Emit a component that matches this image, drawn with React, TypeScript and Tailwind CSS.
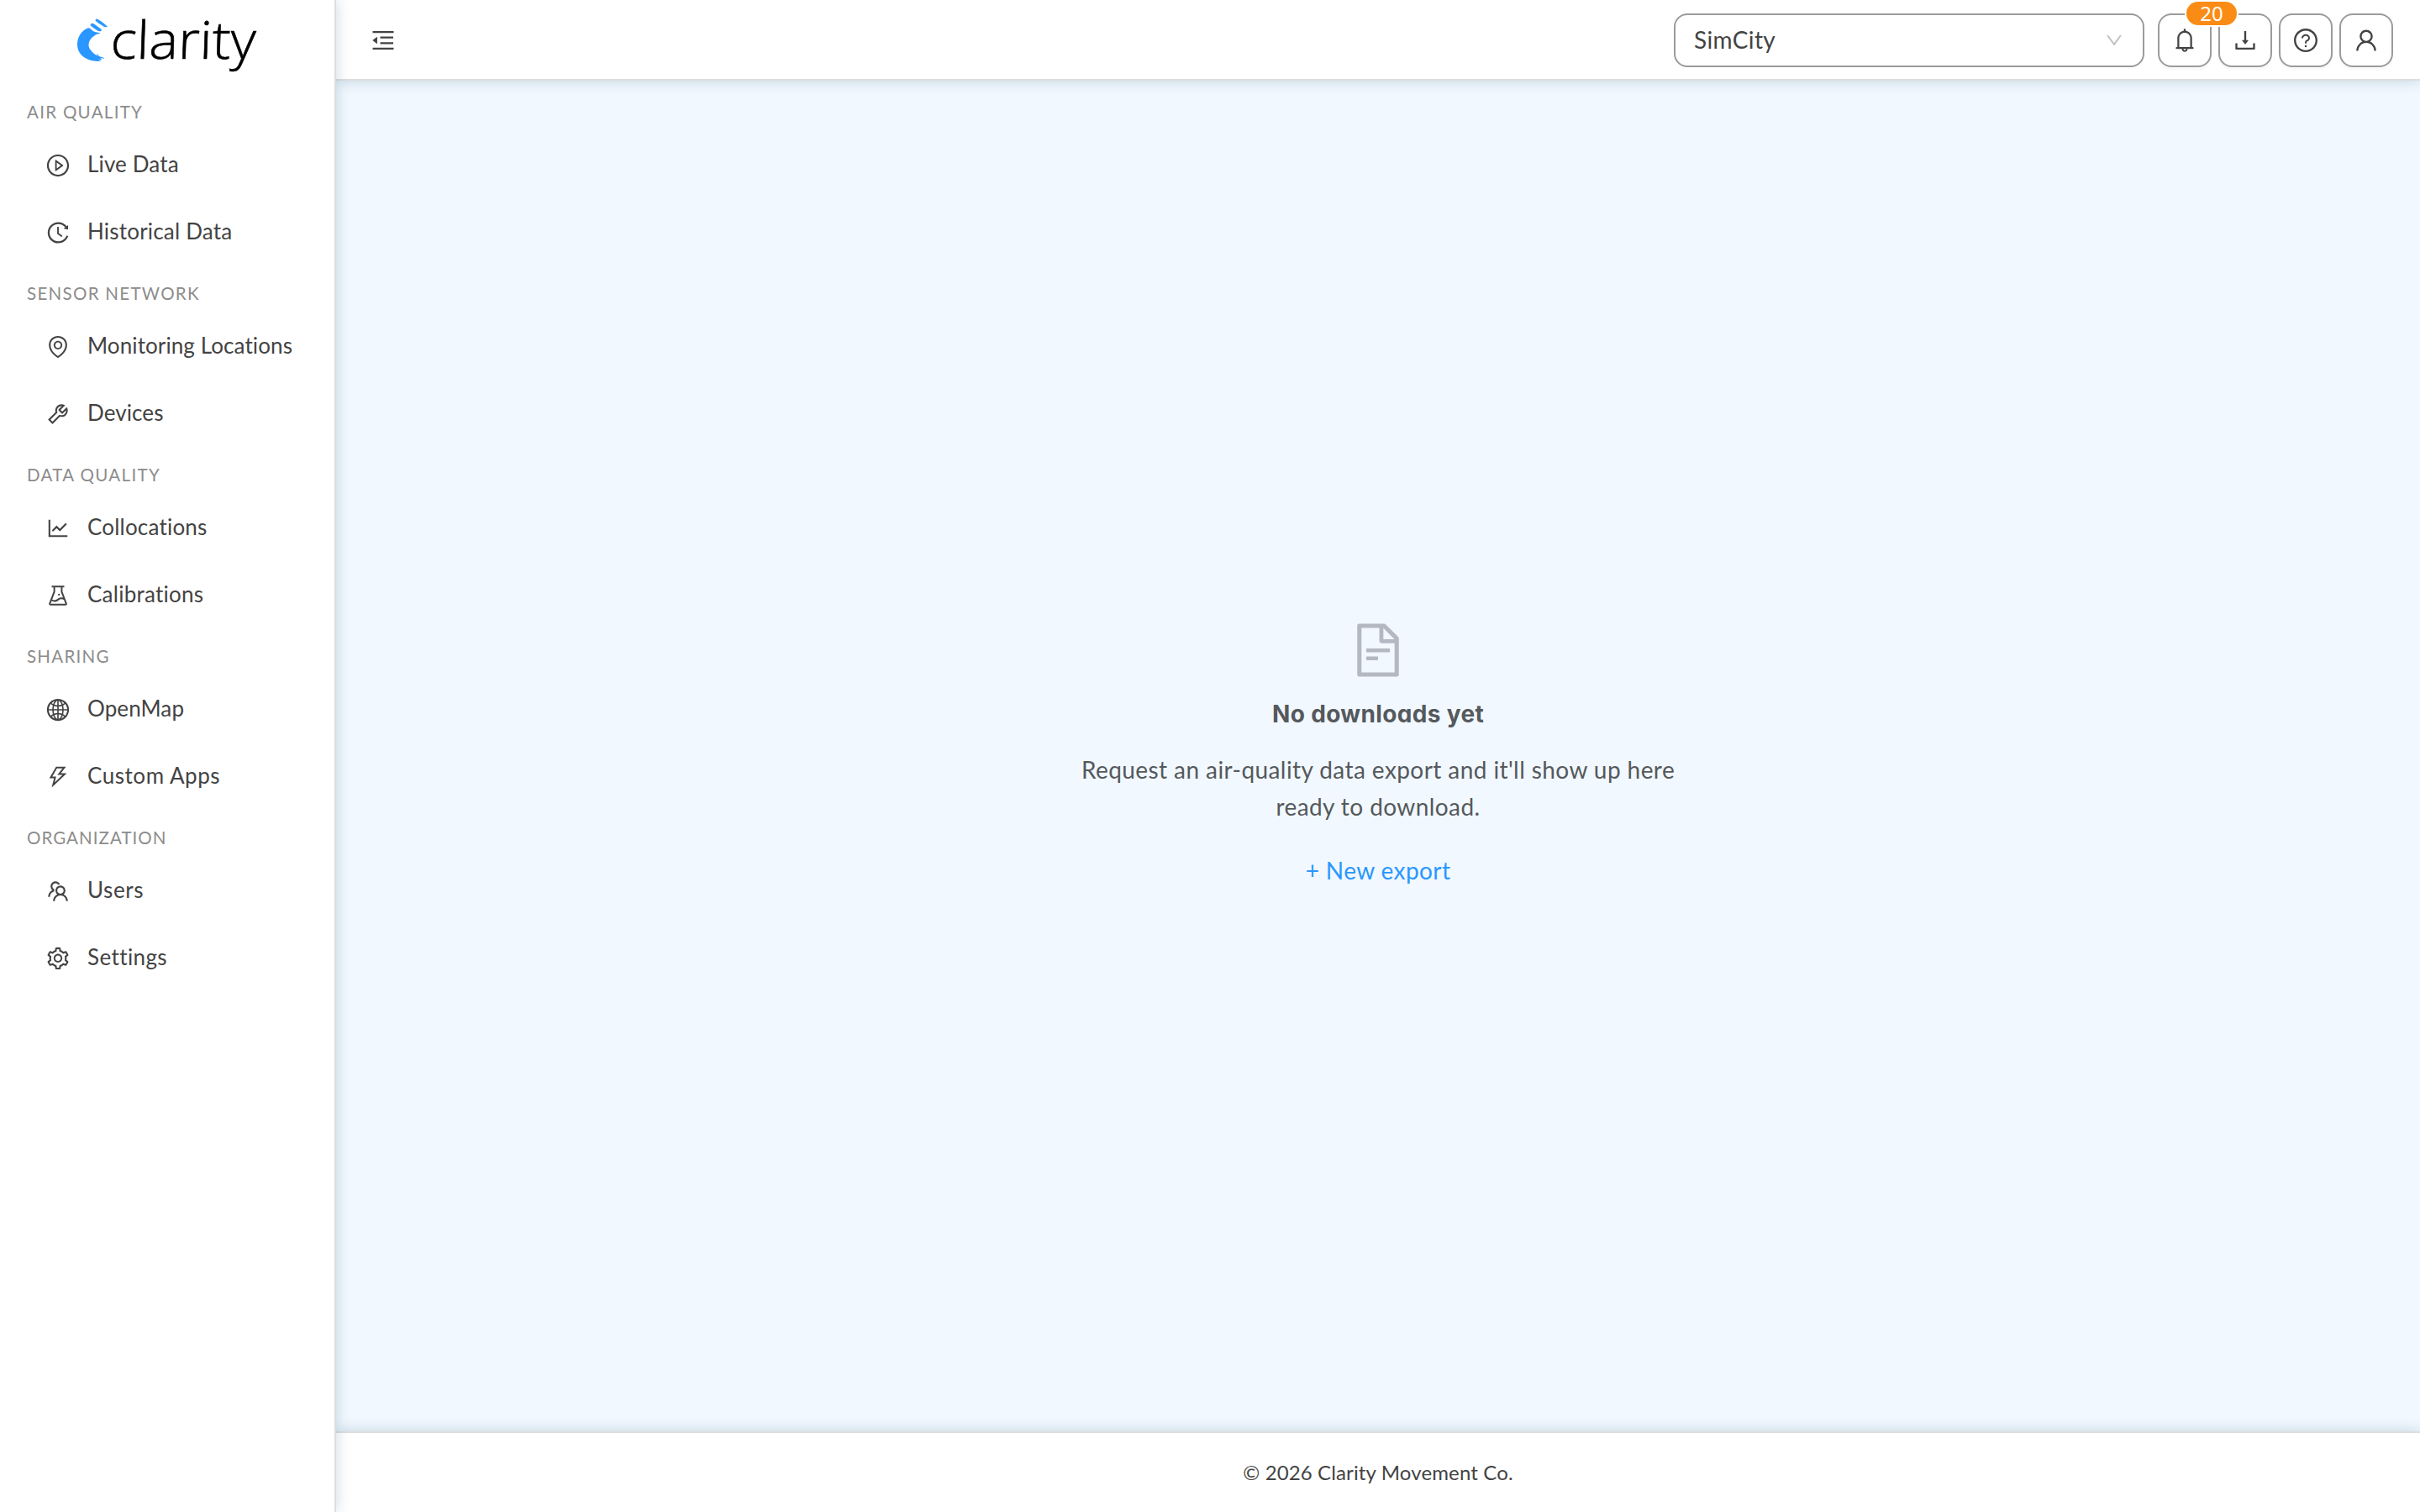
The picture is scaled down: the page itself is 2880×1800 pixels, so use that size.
import type { IconType } from 'react-icons';
import {
  AiOutlineBell,
  AiOutlineDown,
  AiOutlineDownload,
  AiOutlineEnvironment,
  AiOutlineExperiment,
  AiOutlineFileText,
  AiOutlineGlobal,
  AiOutlineHistory,
  AiOutlineLineChart,
  AiOutlineMenuFold,
  AiOutlinePlayCircle,
  AiOutlineQuestionCircle,
  AiOutlineSetting,
  AiOutlineTeam,
  AiOutlineThunderbolt,
  AiOutlineTool,
  AiOutlineUser,
} from 'react-icons/ai';

interface NavItem {
  label: string;
  icon: IconType;
  tracking: string;
}

interface NavGroup {
  title: string;
  tracking: string;
  items: NavItem[];
}

const navGroups: NavGroup[] = [
  {
    title: 'AIR QUALITY',
    tracking: 'tracking-[1.3px]',
    items: [
      { label: 'Live Data', icon: AiOutlinePlayCircle, tracking: 'tracking-[0.15px]' },
      { label: 'Historical Data', icon: AiOutlineHistory, tracking: 'tracking-[0.2px]' },
    ],
  },
  {
    title: 'SENSOR NETWORK',
    tracking: 'tracking-[1.3px]',
    items: [
      { label: 'Monitoring Locations', icon: AiOutlineEnvironment, tracking: 'tracking-[0.1px]' },
      { label: 'Devices', icon: AiOutlineTool, tracking: 'tracking-[0.1px]' },
    ],
  },
  {
    title: 'DATA QUALITY',
    tracking: 'tracking-[1.35px]',
    items: [
      { label: 'Collocations', icon: AiOutlineLineChart, tracking: 'tracking-[0.2px]' },
      { label: 'Calibrations', icon: AiOutlineExperiment, tracking: 'tracking-[0.25px]' },
    ],
  },
  {
    title: 'SHARING',
    tracking: 'tracking-[1.25px]',
    items: [
      { label: 'OpenMap', icon: AiOutlineGlobal, tracking: 'tracking-[0.1px]' },
      { label: 'Custom Apps', icon: AiOutlineThunderbolt, tracking: 'tracking-[0.55px]' },
    ],
  },
  {
    title: 'ORGANIZATION',
    tracking: 'tracking-[1.05px]',
    items: [
      { label: 'Users', icon: AiOutlineTeam, tracking: 'tracking-[0.6px]' },
      { label: 'Settings', icon: AiOutlineSetting, tracking: 'tracking-[0.4px]' },
    ],
  },
];

function Logo() {
  return (
    <svg className="h-[108px] w-[240px]" viewBox="0 -10 240 108">
      <g fill="#2997ff">
        <path d="M24.5 23.5c1.5-.5 3 .5 5 2.5 2 2 5 2.500 8.500 3l1.500 1c-3 0-5 .8-6.500 2-1.500 1.500-4 2.500-5 4.500-1.500 2-2.500 4-2.500 7 0 3 1.500 5.500 4 8 2 2 3.500 3.500 6.500 5l-1-3 3 3.500 6 2-.5.8-4-.8 2 2.500-5-1 4 2c-3 .7-6 .6-9 0C20.500 61 12 54 12 43c0-9 5-16.500 12.500-19.500z" />
        <path d="M33.500 14.500c0-1.500 1.500-2.500 3-1.500 4.500 2.500 8.500 5.500 11.500 9-2 .6-4 0-5.500-1-3-2-6-3.500-9-6.500z" />
        <path d="M27.500 20c.5-2 2-2.800 3.500-2 3 2 7 4.500 10 7.500l-1 1.800c-2 0-3.500-.5-5-1.500-2.500-1.800-5-3.300-7.500-5.800z" />
      </g>
      <text
        x="53"
        y="60"
        textLength="173"
        lengthAdjust="spacingAndGlyphs"
        transform="skewX(-2)"
        strokeWidth="0.6"
        className="fill-black stroke-black font-['Open_Sans'] text-[62px] font-light"
      >
        clarity
      </text>
    </svg>
  );
}

function Sidebar() {
  return (
    <aside className="relative z-20 flex w-[400px] shrink-0 flex-col border-r-2 border-[#dedede] bg-white shadow-[0_0_16px_rgba(0,60,90,0.2)]">
      <div className="h-[109px] pl-20">
        <Logo />
      </div>
      <nav>
        {navGroups.map((group) => (
          <div key={group.title} className="h-[216px]">
            <h2 className={`flex h-12 items-center pl-8 text-[20.5px] text-[#8c8c8c] ${group.tracking}`}>
              {group.title}
            </h2>
            {group.items.map(({ label, icon: Icon, tracking }) => (
              <a key={label} className="flex h-20 items-center gap-5 pl-[54px]">
                <Icon className="size-[30px]" />
                <span className={`pb-1 text-[26px] whitespace-nowrap ${tracking}`}>{label}</span>
              </a>
            ))}
          </div>
        ))}
      </nav>
    </aside>
  );
}

const headerButton =
  'relative flex size-16 items-center justify-center rounded-2xl border-2 border-[#9b9b9b] bg-white shadow-[0_4px_0_rgba(0,0,0,0.02)]';

function Header() {
  return (
    <header className="relative z-10 flex h-24 shrink-0 items-center border-b-2 border-[#dedede] bg-white pt-0.5 pr-8 pl-10 shadow-[0_0_16px_rgba(0,60,90,0.2)]">
      <AiOutlineMenuFold className="size-8" />
      <div className="ml-auto flex h-16 w-[560px] items-center justify-between rounded-2xl border-2 border-[#9b9b9b] pr-[22px] pl-[22px]">
        <span className="pb-[3px] text-[28px] tracking-[0.4px]">SimCity</span>
        <AiOutlineDown className="size-6 text-[#bfbfbf]" />
      </div>
      <div className="ml-4 flex gap-2">
        <button className={headerButton}>
          <AiOutlineBell className="size-8" />
          <span className="absolute -top-4 left-8 z-10 flex h-7 w-[60px] items-center justify-center rounded-full bg-[#fa8c16] font-['Noto_Sans'] text-2xl text-white ring-2 ring-white">
            20
          </span>
        </button>
        <button className={headerButton}>
          <AiOutlineDownload className="size-8" />
        </button>
        <button className={headerButton}>
          <AiOutlineQuestionCircle className="size-8" />
        </button>
        <button className={headerButton}>
          <AiOutlineUser className="size-8" />
        </button>
      </div>
    </header>
  );
}

function EmptyDownloads() {
  return (
    <main className="flex flex-1 flex-col items-center bg-[#f1f8ff] pt-[642px] text-[#55595c]">
      <AiOutlineFileText className="size-[72px] text-[#b3b8c2]" />
      <h1 className="mt-[18px] font-['Inter'] text-[28px] leading-[44px] font-bold tracking-[0.35px] [font-feature-settings:'cv11']">
        No downloads yet
      </h1>
      <p className="mt-[22px] text-center text-[28px] leading-[44px] tracking-[0.42px]">
        Request an air-quality data export and it'll show up here
        <br />
        ready to download.
      </p>
      <a className="mt-8 text-[28px] leading-[44px] tracking-[0.4px] text-[#2997ff]">+ New export</a>
    </main>
  );
}

export default function App() {
  return (
    <div className="flex h-[1800px] w-[2880px] overflow-hidden bg-white font-['Lato',sans-serif] text-[#434343]">
      <Sidebar />
      <div className="flex flex-1 flex-col">
        <Header />
        <EmptyDownloads />
        <footer className="relative flex h-24 shrink-0 items-center justify-center border-t-2 border-[#dedede] bg-white text-2xl tracking-[0.13px] shadow-[0_0_16px_rgba(0,60,90,0.2)]">
          © 2026 Clarity Movement Co.
        </footer>
      </div>
    </div>
  );
}
